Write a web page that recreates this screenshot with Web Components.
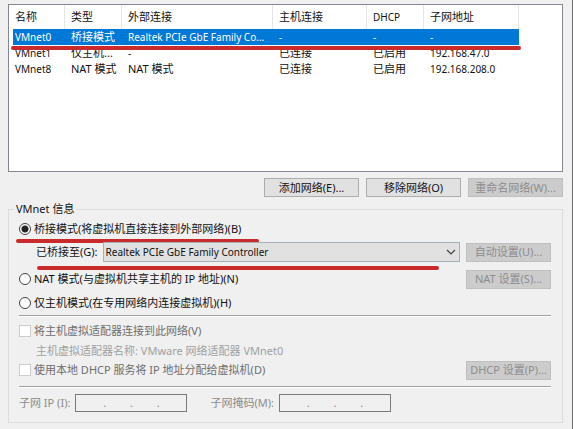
<!DOCTYPE html>
<html lang="zh-CN">
<head>
<meta charset="utf-8">
<meta name="viewport" content="width=device-width, initial-scale=1">
<title>虚拟网络编辑器</title>
<style>
    body {
        margin: 0;
        min-height: 100vh;
        box-sizing: border-box;
        background-color: #f0f0f0;
        border-right: 1px solid #6b6b6b;
        color: #111;
        font-family: "Noto Sans", "Noto Sans CJK SC", sans-serif;
        font-size: 11px;
        line-height: 16px;
    }
</style>
</head>
<body>
<network-editor>
    <network-list slot="list"></network-list>
    <push-button slot="actions">添加网络(E)...</push-button>
    <push-button slot="actions">移除网络(O)</push-button>
    <push-button slot="actions" disabled>重命名网络(W)...</push-button>
    <network-info slot="info"></network-info>
</network-editor>

<script>
class NetworkEditor extends HTMLElement {
    constructor() {
        super();
        this.attachShadow({ mode: 'open' });
    }

    connectedCallback() {
        this.shadowRoot.innerHTML = `
            <style>
                :host {
                    display: flex;
                    flex-direction: column;
                    padding: 4px 9px 5px 8px;
                }
                .actions {
                    display: grid;
                    grid-template-columns: repeat(3, 95px);
                    justify-content: end;
                    gap: 7px;
                    padding: 6px 0 4px;
                }
            </style>
            <slot name="list"></slot>
            <div class="actions"><slot name="actions"></slot></div>
            <slot name="info"></slot>
        `;
    }
}

class PushButton extends HTMLElement {
    constructor() {
        super();
        this.attachShadow({ mode: 'open' });
    }

    connectedCallback() {
        const disabled = this.hasAttribute('disabled');

        this.shadowRoot.innerHTML = `
            <style>
                :host {
                    display: block;
                }
                button {
                    display: block;
                    width: 100%;
                    height: 19px;
                    padding: 0;
                    box-sizing: border-box;
                    border: 1px solid #adadad;
                    border-radius: 0;
                    background-color: #e1e1e1;
                    color: #111;
                    font: inherit;
                    white-space: nowrap;
                }
                button:disabled {
                    background-color: #cccccc;
                    border-color: #bfbfbf;
                    color: #8c8c8c;
                }
            </style>
            <button type="button" ${disabled ? 'disabled' : ''}><slot></slot></button>
        `;
    }
}

/* Red underline, placed under whatever positioned box holds it */
class MarkLine extends HTMLElement {
    constructor() {
        super();
        this.attachShadow({ mode: 'open' });
    }

    connectedCallback() {
        this.shadowRoot.innerHTML = `
            <style>
                :host {
                    display: block;
                    position: absolute;
                    height: 4px;
                    border-radius: 2px;
                    background-color: #c92a2c;
                    pointer-events: none;
                }
            </style>
        `;
    }
}

class NetworkList extends HTMLElement {
    constructor() {
        super();
        this.attachShadow({ mode: 'open' });
        this.rows = [
            ['VMnet0', '桥接模式', 'Realtek PCIe GbE Family Co...', '-', '-', '-'],
            ['VMnet1', '仅主机...', '-', '已连接', '已启用', '192.168.47.0'],
            ['VMnet8', 'NAT 模式', 'NAT 模式', '已连接', '已启用', '192.168.208.0']
        ];
    }

    connectedCallback() {
        // Latin-only cells are set one size smaller than the Chinese ones
        const cell = text => `<td class="${/^[\x20-\x7e]+$/.test(text) ? 'latin' : ''}">${text}</td>`;
        const body = this.rows.map((row, i) => `
            <tr class="${i === 0 ? 'selected' : ''}">${row.map(cell).join('')}</tr>
        `).join('');

        this.shadowRoot.innerHTML = `
            <style>
                :host {
                    display: block;
                    min-height: 168px;
                    box-sizing: border-box;
                    padding: 0 4px;
                    background-color: #fff;
                    border: 1px solid #828790;
                }
                .view {
                    position: relative;
                    width: max-content;
                }
                table {
                    table-layout: fixed;
                    width: 506px;
                    border-collapse: separate;
                    border-spacing: 0;
                }
                th, td {
                    padding: 0 0 0 6px;
                    text-align: left;
                    font-weight: normal;
                    white-space: nowrap;
                    overflow: hidden;
                }
                th:first-child, td:first-child {
                    padding-left: 2px;
                }
                th {
                    height: 24px;
                    border-right: 1px solid #e5e5e5;
                }
                td {
                    height: 16px;
                }
                .latin {
                    font-size: 10px;
                }
                .selected td {
                    background-color: #0078d7;
                    color: #fff;
                }
                mark-line {
                    left: -2px;
                    right: -2px;
                    top: 41px;
                }
            </style>
            <div class="view">
                <table>
                    <colgroup>
                        <col style="width: 52px">
                        <col style="width: 57px">
                        <col style="width: 151px">
                        <col style="width: 94px">
                        <col style="width: 57px">
                        <col style="width: 95px">
                    </colgroup>
                    <thead>
                        <tr><th>名称</th><th>类型</th><th>外部连接</th><th>主机连接</th><th class="latin">DHCP</th><th>子网地址</th></tr>
                    </thead>
                    <tbody>${body}</tbody>
                </table>
                <mark-line></mark-line>
            </div>
        `;
    }
}

class IpField extends HTMLElement {
    constructor() {
        super();
        this.attachShadow({ mode: 'open' });
    }

    connectedCallback() {
        const label = this.getAttribute('label');
        const octet = n => `<input type="text" maxlength="3" disabled aria-label="${label} ${n}">`;

        this.shadowRoot.innerHTML = `
            <style>
                :host {
                    display: flex;
                    align-items: center;
                    gap: 5px;
                    color: #8c8c8c;
                }
                .box {
                    display: flex;
                    width: 112px;
                    height: 18px;
                    box-sizing: border-box;
                    padding: 0 3px;
                    border: 1px solid #7a7a7a;
                }
                input {
                    flex: 1;
                    min-width: 0;
                    padding: 0;
                    border: 0;
                    background: none;
                    font: inherit;
                    text-align: center;
                }
            </style>
            <span>${label}</span>
            <div class="box" role="group" aria-label="${label}">
                ${[1, 2, 3, 4].map(octet).join('<span>.</span>')}
            </div>
        `;
    }
}

class NetworkInfo extends HTMLElement {
    constructor() {
        super();
        this.attachShadow({ mode: 'open' });
    }

    connectedCallback() {
        this.shadowRoot.innerHTML = `
            <style>
                :host {
                    display: block;
                }
                fieldset {
                    margin: 0;
                    padding: 1px 11px 10px 10px;
                    border: 1px solid #dcdcdc;
                    min-width: 0;
                }
                legend {
                    margin-left: -5px;
                    padding: 0 2px;
                }
                .row {
                    display: flex;
                    align-items: center;
                    justify-content: space-between;
                    gap: 6px;
                    height: 24px;
                }
                .row.first {
                    height: 22px;
                }
                .row.bridge {
                    height: 24px;
                    margin-bottom: 3px;
                    padding-left: 17px;
                }
                .row push-button {
                    width: 85px;
                }
                .choice {
                    position: relative;
                    display: flex;
                    align-items: center;
                    gap: 3px;
                    white-space: nowrap;
                }
                .choice input {
                    appearance: none;
                    width: 12px;
                    height: 12px;
                    margin: 0;
                    box-sizing: border-box;
                    border: 1px solid #444;
                    background-color: #fff;
                }
                .choice input[type="radio"] {
                    border-radius: 50%;
                }
                .choice input[type="radio"]:checked {
                    background-image: radial-gradient(circle, #222 3px, transparent 4px);
                }
                .choice input:disabled {
                    border-color: #cccccc;
                }
                .dim {
                    color: #6d6d6d;
                }
                .note {
                    padding-left: 17px;
                    line-height: 15px;
                    color: #a0a0a0;
                }
                .picker {
                    position: relative;
                    flex: 1;
                    display: flex;
                    align-items: center;
                    gap: 5px;
                    white-space: nowrap;
                }
                .combo {
                    position: relative;
                    flex: 1;
                    display: flex;
                }
                select {
                    appearance: none;
                    flex: 1;
                    min-width: 0;
                    height: 20px;
                    padding: 0 20px 0 2px;
                    border: 1px solid #a3b1b8;
                    border-radius: 0;
                    background-color: #e1e1e1;
                    color: #111;
                    font: inherit;
                    font-size: 10px;
                }
                .combo svg {
                    position: absolute;
                    right: 4px;
                    top: 7px;
                    pointer-events: none;
                }
                hr {
                    margin: 0 0 2px;
                    border: 0;
                    border-top: 1px solid #a0a0a0;
                    border-bottom: 1px solid #fff;
                }
                .note ~ hr {
                    margin-top: 4px;
                }
                .subnet {
                    display: flex;
                    gap: 23px;
                    padding-top: 4px;
                }
                .choice mark-line {
                    left: -3px;
                    right: -18px;
                    top: 18px;
                }
                .picker mark-line {
                    left: 1px;
                    right: 21px;
                    top: 24px;
                }
            </style>
            <fieldset>
                <legend>VMnet 信息</legend>
                <div class="row first">
                    <label class="choice"><input type="radio" name="mode" checked>桥接模式(将虚拟机直接连接到外部网络)(B)<mark-line></mark-line></label>
                </div>
                <div class="row bridge">
                    <div class="picker">
                        <label for="adapter">已桥接至(G):</label>
                        <div class="combo">
                            <select id="adapter">
                                <option>Realtek PCIe GbE Family Controller</option>
                            </select>
                            <svg width="10" height="6" viewBox="0 0 10 6" fill="none" stroke="#444" stroke-width="1.2"><path d="M1 1l4 4 4-4"/></svg>
                        </div>
                        <mark-line></mark-line>
                    </div>
                    <push-button disabled>自动设置(U)...</push-button>
                </div>
                <div class="row">
                    <label class="choice"><input type="radio" name="mode">NAT 模式(与虚拟机共享主机的 IP 地址)(N)</label>
                    <push-button disabled>NAT 设置(S)...</push-button>
                </div>
                <div class="row">
                    <label class="choice"><input type="radio" name="mode">仅主机模式(在专用网络内连接虚拟机)(H)</label>
                </div>
                <hr>
                <div class="row">
                    <label class="choice dim"><input type="checkbox" disabled>将主机虚拟适配器连接到此网络(V)</label>
                </div>
                <div class="note">主机虚拟适配器名称: VMware 网络适配器 VMnet0</div>
                <div class="row">
                    <label class="choice dim"><input type="checkbox" disabled>使用本地 DHCP 服务将 IP 地址分配给虚拟机(D)</label>
                    <push-button disabled>DHCP 设置(P)...</push-button>
                </div>
                <hr>
                <div class="subnet">
                    <ip-field label="子网 IP (I):"></ip-field>
                    <ip-field label="子网掩码(M):"></ip-field>
                </div>
            </fieldset>
        `;
    }
}

customElements.define('push-button', PushButton);
customElements.define('mark-line', MarkLine);
customElements.define('ip-field', IpField);
customElements.define('network-list', NetworkList);
customElements.define('network-info', NetworkInfo);
customElements.define('network-editor', NetworkEditor);
</script>
</body>
</html>
